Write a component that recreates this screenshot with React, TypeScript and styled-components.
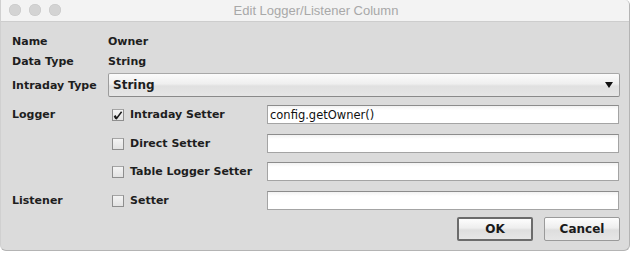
import styled, { createGlobalStyle } from 'styled-components';

const GlobalStyle = createGlobalStyle`
  html, body {
    margin: 0;
    padding: 0;
    background: #ffffff;
  }
  body {
    font-family: "DejaVu Sans", "Liberation Sans", sans-serif;
  }
`;

const rows = [
  { label: 'Logger', setter: 'Intraday Setter', checked: true, value: 'config.getOwner()', gap: 8 },
  { label: '', setter: 'Direct Setter', checked: false, value: '', gap: 10 },
  { label: '', setter: 'Table Logger Setter', checked: false, value: '', gap: 9 },
  { label: 'Listener', setter: 'Setter', checked: false, value: '', gap: 10 },
];

export default function App() {
  return (
    <>
      <GlobalStyle />
      <Window>
        <TitleBar>
          <Lights>
            <Light />
            <Light />
            <Light />
          </Lights>
          <Title>Edit Logger/Listener Column</Title>
        </TitleBar>
        <Body>
          <Row $gap={9}>
            <Label>Name</Label>
            <Value>Owner</Value>
          </Row>
          <Row $gap={0}>
            <Label>Data Type</Label>
            <Value>String</Value>
          </Row>
          <Row $gap={2} $height={24}>
            <Label>Intraday Type</Label>
            <Combo>
              <span>String</span>
              <Arrow />
            </Combo>
          </Row>
          {rows.map((r, i) => (
            <Row key={i} $gap={r.gap} $height={19}>
              <Label>{r.label}</Label>
              <CheckLabel>
                <Box>
                  {r.checked && (
                    <svg width="10" height="10" viewBox="0 0 10 10">
                      <path d="M1.8 5.6 L3.6 8.4 L8.6 1.8" fill="none" stroke="#1a1a1a" strokeWidth="1.5" />
                      <path d="M1.6 5.8 L3.4 8.6" fill="none" stroke="#1a1a1a" strokeWidth="2.2" />
                    </svg>
                  )}
                </Box>
                {r.setter}
              </CheckLabel>
              <Field>{r.value}</Field>
            </Row>
          ))}
          <Buttons>
            <Button $primary>OK</Button>
            <Button>Cancel</Button>
          </Buttons>
        </Body>
      </Window>
    </>
  );
}

const Window = styled.div`
  width: 630px;
  height: 251px;
  box-sizing: border-box;
  border: 1px solid #b4b4b4;
  border-top: none;
  border-left-color: #d0d0d0;
  border-radius: 0 5px 6px 6px;
  background: #dbdbdb;
  overflow: hidden;
`;

const TitleBar = styled.div`
  position: relative;
  height: 21px;
  background: #f3f3f3;
  border-bottom: 1px solid #cdcdcd;
  display: flex;
  align-items: center;
  justify-content: center;
`;

const Lights = styled.div`
  position: absolute;
  left: 8px;
  top: 4px;
  display: flex;
  gap: 8px;
`;

const Light = styled.div`
  width: 12px;
  height: 12px;
  border-radius: 50%;
  background: #d3d3d3;
  box-shadow: inset 0 0 0 0.5px #c6c6c6;
`;

const Title = styled.div`
  font-family: "Liberation Sans", Arial, sans-serif;
  font-size: 13px;
  color: #a8a8a8;
  margin-left: 2px;
`;

const Body = styled.div`
  padding: 0 9px 0 11px;
  display: flex;
  flex-direction: column;
`;

const Row = styled.div<{ $gap: number; $height?: number }>`
  display: grid;
  grid-template-columns: 96px 159px 1fr;
  align-items: center;
  height: ${(p) => p.$height ?? 20}px;
  margin-top: ${(p) => p.$gap}px;
  font-size: 11px;
  font-weight: bold;
  color: #1e1e1e;
`;

const Label = styled.div`
  white-space: nowrap;
`;

const Value = styled.div`
  grid-column: 2 / 4;
`;

const Combo = styled.div`
  grid-column: 2 / 4;
  height: 24px;
  box-sizing: border-box;
  border: 1px solid #9c9c9c;
  border-top-color: #a8a8a8;
  border-bottom-color: #8a8a8a;
  border-radius: 2px;
  background: linear-gradient(#fbfbfb, #efefef 45%, #e0e0e0 55%, #e6e6e6);
  display: flex;
  align-items: center;
  justify-content: space-between;
  padding: 0 6px 0 4px;
  font-size: 12px;
`;

const Arrow = styled.div`
  width: 0;
  height: 0;
  border-left: 4.5px solid transparent;
  border-right: 4.5px solid transparent;
  border-top: 6px solid #111;
`;

const CheckLabel = styled.div`
  display: flex;
  align-items: center;
  gap: 6px;
  padding-left: 4px;
  font-size: 11px;
  white-space: nowrap;
`;

const Box = styled.div`
  width: 12px;
  height: 12px;
  box-sizing: border-box;
  border: 1px solid #8e8e8e;
  border-top-color: #a5a5a5;
  background: linear-gradient(#f4f4f4, #e2e2e2);
  display: flex;
  align-items: center;
  justify-content: center;
`;

const Field = styled.div`
  height: 19px;
  box-sizing: border-box;
  border: 1px solid #a4a4a4;
  border-top-color: #8c8c8c;
  background: linear-gradient(#f2f2f2, #ffffff 4px);
  padding: 1px 2px 0;
  font-family: "DejaVu Sans", sans-serif;
  font-weight: normal;
  font-size: 11.5px;
  line-height: 16px;
  color: #111;
  margin-right: 1px;
`;

const Buttons = styled.div`
  display: flex;
  justify-content: flex-end;
  gap: 11px;
  margin-top: 7px;
`;

const Button = styled.div<{ $primary?: boolean }>`
  width: 76px;
  height: 24px;
  box-sizing: border-box;
  border: ${(p) => (p.$primary ? '2px solid #6c6c6c' : '1px solid #9a9a9a')};
  border-radius: 2px;
  background: linear-gradient(#fdfdfd, #eeeeee 45%, #dedede 55%, #e6e6e6);
  display: flex;
  align-items: center;
  justify-content: center;
  font-size: 12px;
  font-weight: bold;
  color: #1a1a1a;
`;
